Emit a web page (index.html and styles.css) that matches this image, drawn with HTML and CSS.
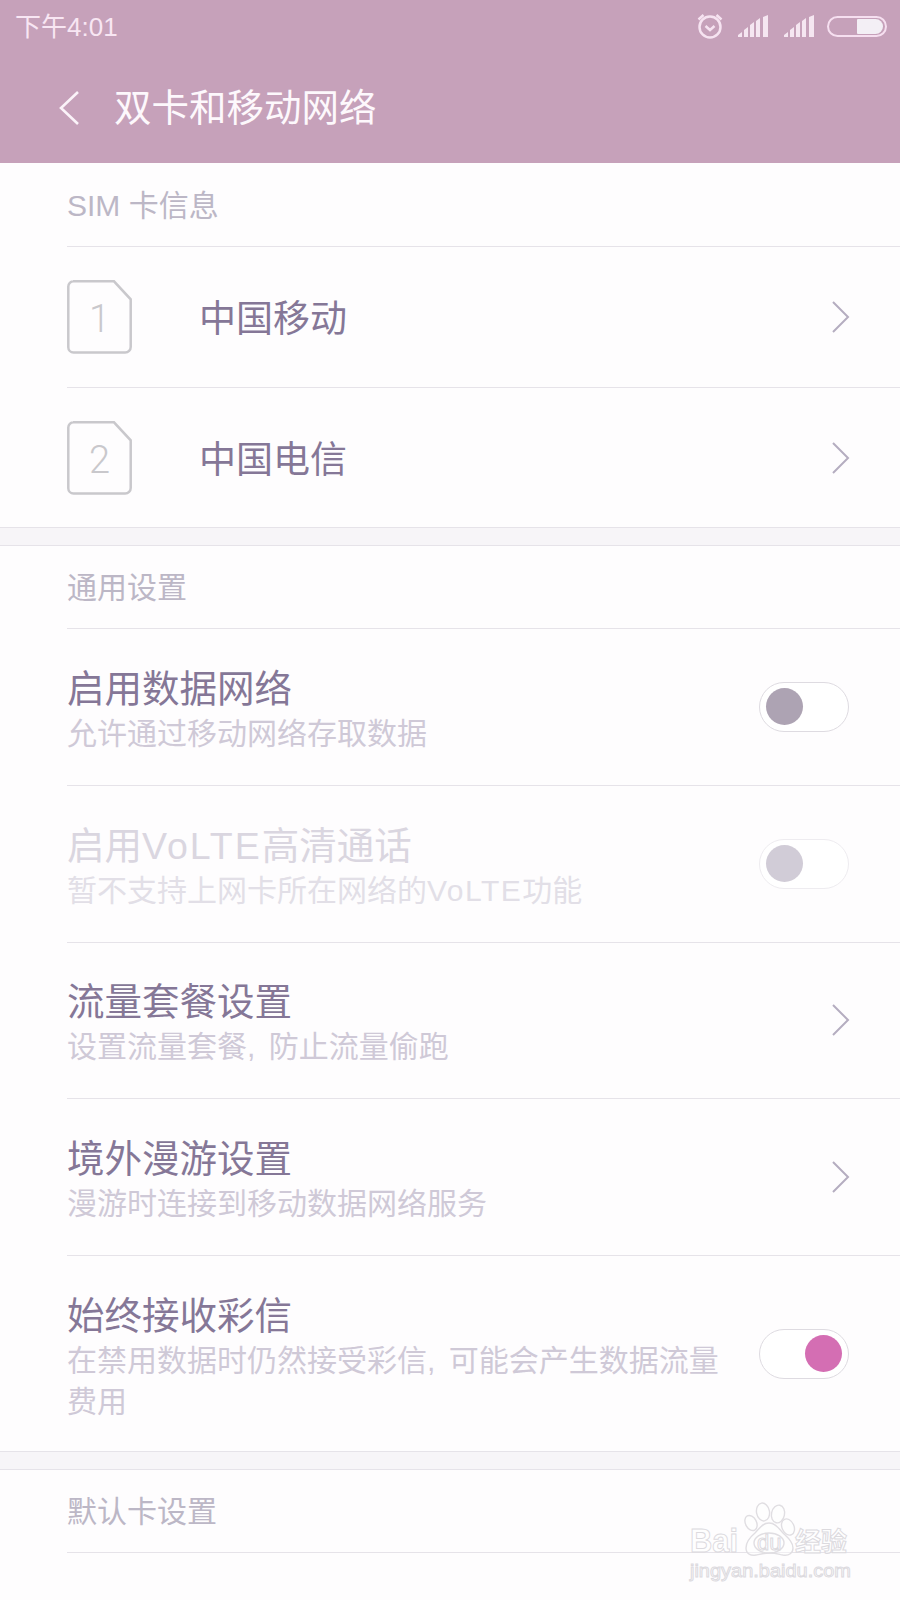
FILE: index.html
```html
<!DOCTYPE html>
<html lang="zh-CN">
<head>
    <meta charset="UTF-8">
    <meta name="viewport" content="width=device-width, initial-scale=1.0">
    <title>双卡和移动网络</title>
    <link rel="stylesheet" href="styles.css">
</head>
<body>
    <div class="page">
        <header class="header">
            <div class="status-bar">
                <span class="status-time">下午4:01</span>
                <div class="status-icons">
                    <svg class="icon-alarm" width="28" height="28" viewBox="0 0 28 28">
                        <circle cx="14" cy="15" r="10.5"/>
                        <path d="M9.5 14l4.5 4 4.5-4"/>
                        <path d="M2.5 7.5l5-4.5M25.5 7.5l-5-4.5"/>
                    </svg>
                    <svg class="icon-signal" width="31" height="22" viewBox="0 0 31 22">
                        <path d="M0 22v-2l4-3v5zM6 22v-7l4-3v10zM12 22v-12l4-3v15zM18 22v-16l4-3v19zM25 22v-20l5-2v22z"/>
                    </svg>
                    <svg class="icon-signal" width="31" height="22" viewBox="0 0 31 22">
                        <path d="M0 22v-2l4-3v5zM6 22v-7l4-3v10zM12 22v-12l4-3v15zM18 22v-16l4-3v19zM25 22v-20l5-2v22z"/>
                    </svg>
                    <div class="battery"><div class="battery-level"></div></div>
                </div>
            </div>
            <div class="toolbar">
                <svg class="icon-back" width="22" height="36" viewBox="0 0 22 36">
                    <path d="M20 2L3 18l17 16"/>
                </svg>
                <h1 class="toolbar-title">双卡和移动网络</h1>
            </div>
        </header>

        <section class="section section-first">
            <div class="section-title">SIM 卡信息</div>
            <div class="sim-row">
                <div class="sim-icon">
                    <svg width="65" height="74" viewBox="0 0 65 74">
                        <path d="M6 1.3h41l16.700 18v47.700a5.500 5.500 0 0 1-5.500 5.500H6.500a5.200 5.200 0 0 1-5.200-5.200V6.500a5.200 5.200 0 0 1 5.200-5.200z"/>
                    </svg>
                    <span class="sim-number">1</span>
                </div>
                <span class="sim-name">中国移动</span>
                <svg class="chevron" width="19" height="32" viewBox="0 0 19 32"><path d="M2 1l15 15L2 31"/></svg>
            </div>
            <div class="sim-row">
                <div class="sim-icon">
                    <svg width="65" height="74" viewBox="0 0 65 74">
                        <path d="M6 1.3h41l16.700 18v47.700a5.500 5.500 0 0 1-5.500 5.500H6.500a5.200 5.200 0 0 1-5.200-5.200V6.500a5.200 5.200 0 0 1 5.200-5.200z"/>
                    </svg>
                    <span class="sim-number">2</span>
                </div>
                <span class="sim-name">中国电信</span>
                <svg class="chevron" width="19" height="32" viewBox="0 0 19 32"><path d="M2 1l15 15L2 31"/></svg>
            </div>
        </section>

        <div class="section-gap"></div>

        <section class="section">
            <div class="section-title">通用设置</div>
            <div class="row">
                <div class="row-text">
                    <div class="row-title">启用数据网络</div>
                    <div class="row-sub">允许通过移动网络存取数据</div>
                </div>
                <div class="toggle"><div class="knob"></div></div>
            </div>
            <div class="row row-disabled">
                <div class="row-text">
                    <div class="row-title">启用<span class="latin">VoLTE</span>高清通话</div>
                    <div class="row-sub">暂不支持上网卡所在网络的<span class="latin">VoLTE</span>功能</div>
                </div>
                <div class="toggle"><div class="knob"></div></div>
            </div>
            <div class="row">
                <div class="row-text">
                    <div class="row-title">流量套餐设置</div>
                    <div class="row-sub">设置流量套餐, 防止流量偷跑</div>
                </div>
                <svg class="chevron" width="19" height="32" viewBox="0 0 19 32"><path d="M2 1l15 15L2 31"/></svg>
            </div>
            <div class="row">
                <div class="row-text">
                    <div class="row-title">境外漫游设置</div>
                    <div class="row-sub">漫游时连接到移动数据网络服务</div>
                </div>
                <svg class="chevron" width="19" height="32" viewBox="0 0 19 32"><path d="M2 1l15 15L2 31"/></svg>
            </div>
            <div class="row row-tall">
                <div class="row-text">
                    <div class="row-title">始终接收彩信</div>
                    <div class="row-sub">在禁用数据时仍然接受彩信, 可能会产生数据流量费用</div>
                </div>
                <div class="toggle toggle-on"><div class="knob"></div></div>
            </div>
        </section>

        <div class="section-gap"></div>

        <section class="section">
            <div class="section-title">默认卡设置</div>
        </section>

        <svg class="watermark" width="170" height="90" viewBox="0 0 170 90">
            <ellipse class="wm-line" cx="75" cy="12" rx="6.500" ry="9" transform="rotate(-10 75 12)"/>
            <ellipse class="wm-line" cx="90" cy="14" rx="6.500" ry="9" transform="rotate(12 90 14)"/>
            <ellipse class="wm-line" cx="63" cy="23" rx="5.500" ry="8" transform="rotate(-28 63 23)"/>
            <ellipse class="wm-line" cx="100" cy="27" rx="6" ry="8.500" transform="rotate(-25 100 27)"/>
            <path class="wm-line" d="M81 23c-7 0-10 6-14 10-6 5-9 10-9 15 0 6 5 8 10 7 5-1 9-2 14-2s8 1 13 2c6 1 10-2 10-7 0-6-5-10-10-15-4-4-7-10-14-10z"/>
            <ellipse class="wm-line" cx="81" cy="43" rx="15" ry="10"/>
            <text class="wm-text wm-big" x="2" y="52" textLength="48" lengthAdjust="spacingAndGlyphs">Bai</text>
            <text class="wm-text wm-small" x="69" y="50">du</text>
            <text class="wm-text wm-cn" x="107" y="51">经验</text>
            <text class="wm-text wm-url" x="2" y="76.500" textLength="161" lengthAdjust="spacingAndGlyphs">jingyan.baidu.com</text>
        </svg>
    </div>
</body>
</html>
```

FILE: styles.css
```css
:root {
    --header-color: #c6a1ba;
    --page-color: #fefdfe;
    --gap-color: #f7f5f8;
    --line-color: #e6e3e9;
    --title-color: #857797;
    --sub-color: #cfc9d7;
    --section-color: #bcb7c6;
    --icon-color: #c9c8cc;
}

* {
    box-sizing: border-box;
}

body {
    margin: 0;
    background-color: var(--page-color);
    font-family: "Liberation Sans", "Noto Sans CJK SC", sans-serif;
}

.page {
    position: relative;
    height: 1600px;
    overflow: hidden;
}

/* header */
.header {
    height: 163px;
    background-color: var(--header-color);
}

.status-bar {
    display: flex;
    justify-content: space-between;
    align-items: center;
    height: 52px;
    padding: 0 13px 0 15px;
}

.status-time {
    padding-bottom: 4px;
    font-size: 26px;
    color: #f8e6f3;
}

.status-icons {
    display: flex;
    align-items: center;
}

.icon-alarm {
    margin-right: 14px;
    fill: none;
    stroke: #f6e3f1;
    stroke-width: 2.5;
}

.icon-signal {
    margin-right: 15px;
    fill: #f5e6f1;
}

.icon-signal + .battery {
    margin-left: -3px;
}

.battery {
    display: flex;
    justify-content: flex-end;
    width: 60px;
    height: 21px;
    padding: 1px 2px;
    border: 2px solid #f6dff0;
    border-radius: 11px;
}

.battery-level {
    width: 26px;
    background-color: #f3eff5;
    border-radius: 1px 8px 8px 1px;
}

.toolbar {
    display: flex;
    align-items: center;
    height: 111px;
    padding-left: 58px;
}

.icon-back {
    margin-right: 34px;
    fill: none;
    stroke: #fbf3f9;
    stroke-width: 2.6;
}

.toolbar-title {
    margin: 0;
    padding-bottom: 6px;
    font-size: 37.500px;
    font-weight: 400;
    color: #fdf8fc;
}

/* sections */
.section-first {
    padding-top: 1px;
}

.section-title {
    display: flex;
    align-items: center;
    height: 83px;
    margin-left: 67px;
    padding-bottom: 4px;
    font-size: 30px;
    color: var(--section-color);
    border-bottom: 1px solid var(--line-color);
}

.section-gap {
    height: 19px;
    background-color: var(--gap-color);
    border-top: 1px solid var(--line-color);
    border-bottom: 1px solid var(--line-color);
}

.sim-row {
    display: flex;
    align-items: center;
    height: 141px;
    margin-left: 67px;
    padding-right: 50px;
    border-bottom: 1px solid var(--line-color);
}

.sim-row:last-child {
    height: 139px;
    border-bottom: none;
}

.sim-icon {
    position: relative;
    display: flex;
    justify-content: center;
    align-items: center;
    width: 65px;
    height: 74px;
    margin-right: 67px;
}

.sim-icon svg {
    position: absolute;
    top: 0;
    left: 0;
    fill: none;
    stroke: var(--icon-color);
    stroke-width: 2.500;
}

.sim-number {
    padding-top: 4px;
    font-family: Roboto, sans-serif;
    font-size: 38px;
    font-weight: 300;
    color: #c9c8cc;
}

.sim-name {
    flex: 1;
    padding-bottom: 2px;
    font-size: 37px;
    color: var(--title-color);
}

.chevron {
    flex-shrink: 0;
    fill: none;
    stroke: #b5adc0;
    stroke-width: 2;
}

.row {
    display: flex;
    align-items: center;
    gap: 30px;
    height: 156.800px;
    margin-left: 67px;
    padding-right: 50px;
    border-bottom: 1px solid var(--line-color);
}

.row-tall {
    height: 194.800px;
    border-bottom: none;
}

.row-text {
    flex: 1;
    padding-top: 5px;
}

.row-tall .row-text {
    padding-top: 6px;
}

.row-title {
    font-size: 37.500px;
    line-height: 48px;
    color: var(--title-color);
}

.row-sub {
    font-size: 30px;
    line-height: 41px;
    word-spacing: 5px;
    color: var(--sub-color);
}

.row-title .latin {
    letter-spacing: 2px;
}

.row-sub .latin {
    letter-spacing: 1.500px;
}

.row-disabled .row-title {
    color: #dad6e0;
}

.row-disabled .row-sub {
    color: #e2dfe7;
}

/* toggle */
.toggle {
    display: flex;
    align-items: center;
    flex-shrink: 0;
    width: 90px;
    height: 50px;
    margin-right: 1px;
    padding: 0 6px;
    background-color: #fff;
    border: 1px solid #dedbe1;
    border-radius: 25px;
}

.knob {
    width: 37px;
    height: 37px;
    background-color: #ada3b3;
    border-radius: 50%;
}

.row-disabled .toggle {
    border-color: #eeecf0;
}

.row-disabled .knob {
    background-color: #d1ccd7;
}

.toggle-on {
    justify-content: flex-end;
}

.toggle-on .knob {
    background-color: #d46eb3;
}

/* watermark */
.watermark {
    position: absolute;
    top: 1500px;
    left: 688px;
}

.wm-line {
    fill: rgba(255, 255, 255, 0.4);
    stroke: #e0dee2;
    stroke-width: 1.400;
}

.wm-text {
    fill: rgba(255, 255, 255, 0.6);
    stroke: #dcdade;
    stroke-width: 1;
}

.wm-big {
    font-family: "Liberation Sans", sans-serif;
    font-size: 34px;
    font-weight: 700;
}

.wm-small {
    font-family: "Liberation Sans", sans-serif;
    font-size: 22px;
}

.wm-cn {
    font-family: "Noto Sans CJK SC", sans-serif;
    font-size: 26px;
    font-weight: 700;
}

.wm-url {
    font-family: "Liberation Sans", sans-serif;
    font-size: 19px;
}
```
